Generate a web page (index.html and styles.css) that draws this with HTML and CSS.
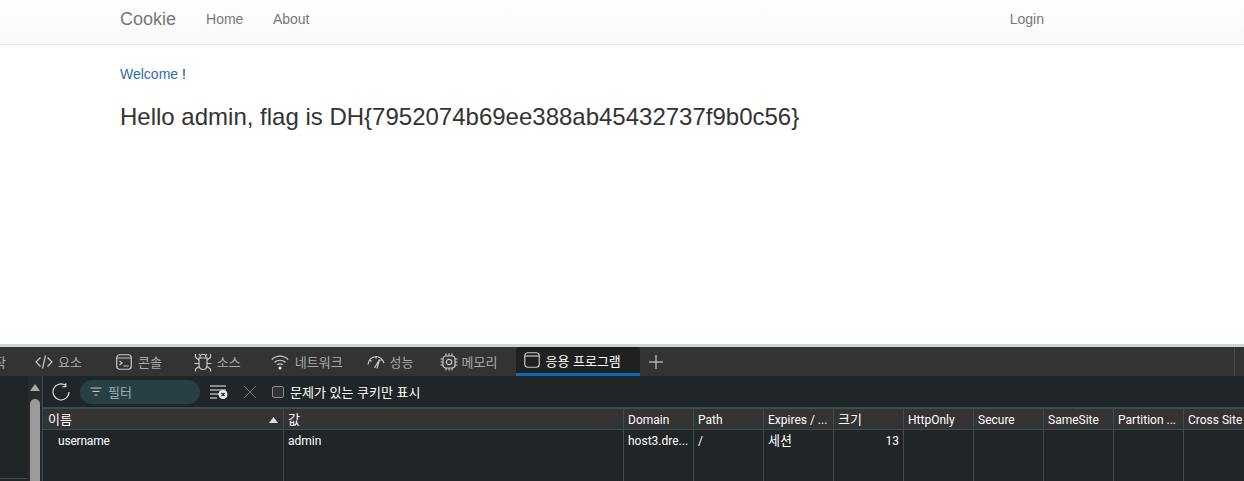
FILE: index.html
```html
<!DOCTYPE html>
<html lang="ko">
<head>
<meta charset="utf-8">
<title>Cookie</title>
<link rel="stylesheet" href="styles.css">
</head>
<body>
<div class="site">
  <nav class="navbar">
    <div class="nav-left">
      <a class="brand">Cookie</a>
      <a class="nav-link">Home</a>
      <a class="nav-link">About</a>
    </div>
    <a class="nav-link">Login</a>
  </nav>
  <main class="content">
    <p class="welcome"><span class="welcome-word">Welcome</span> !</p>
    <h3 class="flag">Hello admin, flag is DH{7952074b69ee388ab45432737f9b0c56}</h3>
  </main>
</div>
<section class="devtools">
  <div class="tabbar">
    <div class="tab tab-cut">시작</div>
    <div class="tab tab-el">
      <svg class="ico" width="18" height="18" viewBox="0 0 18 18"><path d="M5.500 4.500 1 9l4.500 4.500M12.500 4.500 17 9l-4.500 4.500M10.500 2.500 7.500 15.500"/></svg>
      <span>요소</span>
    </div>
    <div class="tab tab-con">
      <svg class="ico" width="16" height="16" viewBox="0 0 16 16"><rect x=".75" y=".75" width="14.500" height="14.500" rx="3"/><path d="M.75 4h14.500M3.500 7l2.500 2-2.500 2M7.500 12h5"/></svg>
      <span>콘솔</span>
    </div>
    <div class="tab tab-src">
      <svg class="ico" width="18" height="20" viewBox="0 0 18 20"><path d="M6 6c0-5 6-5 6 0M5 6h8v7c0 6-8 6-8 0zM5 8 1.500 5.500V2M13 8l3.500-2.500V2M5 11.500H.5M13 11.500h4.500M5 14.500 1.500 17v2.500M13 14.500l3.500 2.500v2.500M5 2 6.500 4M13 2l-1.500 2"/></svg>
      <span>소스</span>
    </div>
    <div class="tab tab-net">
      <svg class="ico" width="18" height="16" viewBox="0 0 18 16"><path d="M.8 5.500c4.500-4.500 11.900-4.500 16.400 0M3.500 8.500c3-3 8-3 11 0M6.300 11c1.500-1.500 3.900-1.500 5.400 0"/><circle class="dot" cx="9" cy="14" r="1.500"/></svg>
      <span>네트워크</span>
    </div>
    <div class="tab tab-perf">
      <svg class="ico" width="18" height="14" viewBox="0 0 18 14"><path d="M1 9.500C1.500 5 4.500 2 9 1.500c3.500 0 6.500 2.500 8 6.500M3 5l1.500 1.500M9 1.500v2M15 4l-1.500 1.500M7.500 13 12.500 4.500 10 13.500"/></svg>
      <span>성능</span>
    </div>
    <div class="tab tab-mem">
      <svg class="ico" width="18" height="18" viewBox="0 0 18 18"><rect x="3" y="3" width="12" height="12" rx="3"/><circle cx="9" cy="9" r="2.700"/><path d="M6 .5V3M9 .5V3M12 .5V3M6 15v2.500M9 15v2.500M12 15v2.500M.5 6H3M.5 9H3M.5 12H3M15 6h2.500M15 9h2.500M15 12h2.500"/></svg>
      <span>메모리</span>
    </div>
    <div class="tab tab-active">
      <svg class="ico" width="16" height="16" viewBox="0 0 16 16"><rect x=".75" y=".75" width="14.500" height="14.500" rx="3"/><path d="M.75 4h14.500"/></svg>
      <span>응용 프로그램</span>
    </div>
    <svg class="ico plus" width="14" height="14" viewBox="0 0 14 14"><path d="M7 0v14M0 7h14"/></svg>
    <div class="tab-end"></div>
  </div>
  <div class="panel">
    <aside class="sidebar"><div class="side-line"></div></aside>
    <div class="scrollbar">
      <svg class="scroll-arrow" width="10" height="7" viewBox="0 0 10 7"><path d="M5 0l5 7H0z"/></svg>
      <div class="scroll-thumb"></div>
    </div>
    <div class="main">
      <div class="toolbar">
        <svg class="ico refresh" width="18" height="18" viewBox="0 0 18 18"><path d="M13.500 2.300A8 8 0 1 0 17 9M13.800 .3v3.500h-3.600"/></svg>
        <div class="filter">
          <svg class="ico filter-ico" width="12" height="9" viewBox="0 0 12 9"><path d="M.5 1h11M2.500 4.500h7M4.500 8h3"/></svg>
          <span>필터</span>
        </div>
        <svg class="ico clear-all" width="18" height="15" viewBox="0 0 18 15"><path d="M0 2h16M0 6h16M0 10h9M0 14h7"/><circle class="dot" cx="13" cy="10.500" r="4.500"/><path class="x-dark" d="M11.500 9l3 3M14.500 9l-3 3"/></svg>
        <svg class="ico clear" width="14" height="14" viewBox="0 0 14 14"><path d="M1 1l12 12M13 1 1 13"/></svg>
        <label class="check"><span class="box"></span>문제가 있는 쿠키만 표시</label>
      </div>
      <div class="grid">
        <div class="head first ko">이름<svg class="sort" width="9" height="6" viewBox="0 0 9 6"><path d="M4.500 0 9 6H0z"/></svg></div>
        <div class="head ko">값</div>
        <div class="head">Domain</div>
        <div class="head">Path</div>
        <div class="head">Expires / ...</div>
        <div class="head ko">크기</div>
        <div class="head">HttpOnly</div>
        <div class="head">Secure</div>
        <div class="head">SameSite</div>
        <div class="head">Partition ...</div>
        <div class="head last">Cross Site</div>

        <div class="cell first name">username</div>
        <div class="cell">admin</div>
        <div class="cell">host3.dre...</div>
        <div class="cell">/</div>
        <div class="cell ko">세션</div>
        <div class="cell num">13</div>
        <div class="cell"></div>
        <div class="cell"></div>
        <div class="cell"></div>
        <div class="cell"></div>
        <div class="cell last"></div>

        <div class="fill first"></div>
        <div class="fill"></div>
        <div class="fill"></div>
        <div class="fill"></div>
        <div class="fill"></div>
        <div class="fill"></div>
        <div class="fill"></div>
        <div class="fill"></div>
        <div class="fill"></div>
        <div class="fill"></div>
        <div class="fill last"></div>
      </div>
    </div>
  </div>
</section>
</body>
</html>
```
FILE: styles.css
```css
* { box-sizing: border-box; }
html, body { margin: 0; height: 481px; overflow: hidden; background: #fff; }
body { display: flex; flex-direction: column; font-family: "Liberation Sans", Arial, sans-serif; }

.site { height: 344px; flex: none; }
.navbar {
  height: 45px;
  padding: 0 200px 6px 120px;
  display: flex;
  align-items: center;
  justify-content: space-between;
  background: linear-gradient(#fff, #f8f8f8);
  border-bottom: 1px solid #e7e7e7;
  box-shadow: 0 1px 5px rgba(0,0,0,.04);
}
.nav-left { display: flex; align-items: center; }
.brand { font-size: 18px; color: #777; margin-right: 30px; }
.nav-link { font-size: 14px; color: #777; }
.nav-left .nav-link { margin-right: 29.500px; }
.content { padding: 19px 120px 0; color: #333; }
.welcome { margin: 0; font-size: 14px; line-height: 20px; }
.welcome-word { color: #2a6ead; }
.flag { margin: 20px 0 0; font-size: 24px; font-weight: 400; line-height: 26px; }

.devtools {
  flex: 1;
  min-height: 0;
  display: flex;
  flex-direction: column;
  border-top: 3px solid #c7d7db;
  font-family: Roboto, "Noto Sans CJK KR", sans-serif;
  font-size: 12px;
  color: #fff;
  overflow: hidden;
}
.tabbar {
  height: 29px;
  flex: none;
  background: #333;
  display: flex;
  align-items: center;
  color: #aaa;
  overflow: hidden;
}
.ico { fill: none; stroke: #c8c8c8; stroke-width: 1.200; flex: none; }
.ico .dot { fill: #e8e8e8; stroke: none; }
.tab { display: flex; align-items: center; gap: 5px; height: 29px; flex: none; font-family: "Noto Sans CJK KR", sans-serif; font-size: 13px; }
.tab-cut { width: 6px; overflow: hidden; direction: rtl; white-space: nowrap; margin-right: 29px; }
.tab-el { margin-right: 34px; }
.tab-con { margin-right: 32px; gap: 6px; }
.tab-src { margin-right: 30px; gap: 5px; }
.tab-net { margin-right: 24px; gap: 6px; }
.tab-perf { margin-right: 26px; }
.tab-mem { margin-right: 19px; gap: 4px; }
.tab-active {
  width: 124px;
  padding-left: 8px;
  gap: 5px;
  color: #fff;
  background: #202020;
  border-bottom: 3px solid #0a6cbd;
  border-radius: 3px 3px 0 0;
}
.plus { margin-left: 9px; stroke: #aaa; stroke-width: 1.500; }
.tab-end { margin-left: auto; margin-right: 9px; width: 1px; height: 29px; background: #4a4a4a; }

.panel { flex: 1; min-height: 0; display: flex; background: #202527; }
.sidebar { width: 28px; flex: none; position: relative; }
.side-line { height: 1px; background: #3a4a4d; margin-top: 102px; width: 27px; }
.scrollbar { width: 14px; flex: none; background: #272b2c; display: flex; flex-direction: column; align-items: flex-start; padding: 8px 0 0 2px; }
.scroll-arrow { fill: #aaa; flex: none; }
.scroll-thumb { width: 9.500px; flex: 1; margin-top: 8px; background: #9b9b9b; border-radius: 5px 5px 0 0; }
.main { flex: 1; min-width: 0; display: flex; flex-direction: column; border-left: 1px solid #3b4f53; }

.toolbar { height: 31px; flex: none; display: flex; align-items: center; padding-left: 9px; }
.refresh { stroke: #e8e8e8; stroke-width: 1.100; margin-right: 10px; }
.filter {
  width: 120px;
  height: 24px;
  border-radius: 12px;
  background: #273f45;
  display: flex;
  align-items: center;
  gap: 6px;
  padding-left: 10px;
  color: #9db0b4;
  font-family: "Noto Sans CJK KR", sans-serif;
  font-size: 13px;
}
.filter-ico { stroke: #ccc; }
.clear-all { margin-left: 10px; stroke: #eee; }
.x-dark { stroke: #202527; stroke-width: 1.200; }
.clear { margin-left: 15px; stroke: #777; stroke-width: 1; }
.check { display: flex; align-items: center; gap: 6px; margin-left: 15px; font-family: "Noto Sans CJK KR", sans-serif; font-size: 13px; }
.box { width: 12px; height: 12px; border: 1px solid #8a8a8a; border-radius: 2px; background: #333; }

.grid {
  flex: 1;
  min-height: 0;
  display: grid;
  grid-template-columns: 241px 340px repeat(8, 70px) 60px;
  grid-template-rows: 23px 20px 1fr;
}
.head, .cell, .fill { border-right: 1px solid #3c4d50; padding: 0 4px; white-space: nowrap; overflow: hidden; line-height: 14px; }
.head {
  background: #333;
  border-top: 2px solid #3c4d50;
  border-bottom: 1px solid #3c4d50;
  display: flex;
  align-items: center;
  justify-content: space-between;
  padding-top: 1px;
}
.cell { display: flex; align-items: center; padding-top: 1px; }
.ko { font-family: "Noto Sans CJK KR", sans-serif; font-size: 13px; padding-top: 0; padding-bottom: 1px; }
.first { padding-left: 5px; }
.last { border-right: 0; }
.sort { fill: #ddd; margin-right: 1px; margin-top: 2px; }
.name { padding-left: 15px; letter-spacing: -.2px; }
.num { justify-content: flex-end; }
```
